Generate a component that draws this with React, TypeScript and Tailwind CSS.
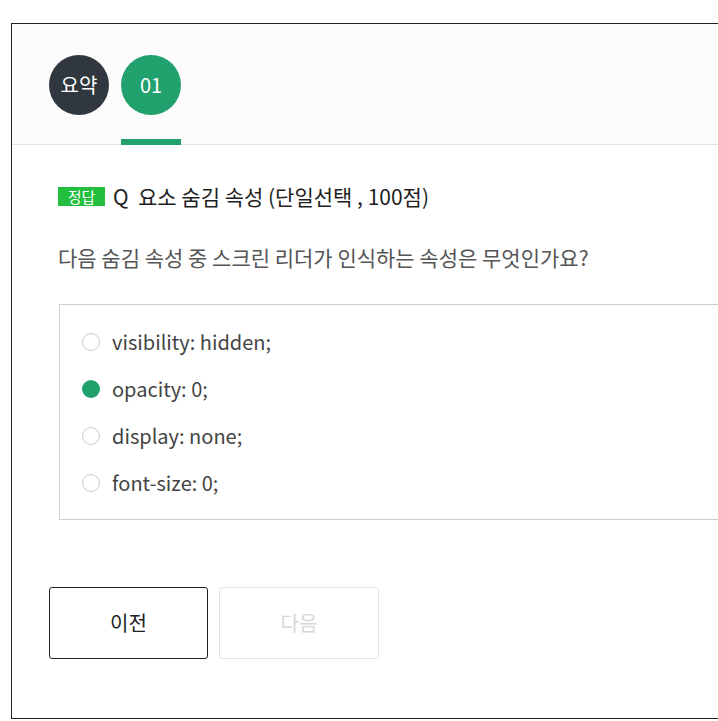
const options = [
  { label: "visibility: hidden;", checked: false },
  { label: "opacity: 0;", checked: true },
  { label: "display: none;", checked: false },
  { label: "font-size: 0;", checked: false },
];

function Radio({ checked }: { checked: boolean }) {
  if (checked) {
    return <span className="block h-[18px] w-[18px] shrink-0 rounded-full bg-[#20a06c]" />;
  }
  return <span className="block h-[18px] w-[18px] shrink-0 rounded-full border border-[#c8ccd0] bg-white" />;
}

export default function App() {
  return (
    <div
      className="h-[721px] w-[718px] overflow-hidden bg-white pl-[11px] pt-[23px]"
      style={{ fontFamily: '"Noto Sans CJK KR", "Noto Sans", sans-serif' }}
    >
      <div className="h-[696px] w-[760px] border border-[#222]">
        <div className="flex h-[121px] gap-3 border-b border-[#e2e2e2] bg-[#fcfcfc] pl-[37px] pt-[31px]">
          <div className="flex flex-col">
            <span className="grid h-[60px] w-[60px] place-items-center rounded-full bg-[#30373f] text-[20px] leading-none text-white">
              요약
            </span>
          </div>
          <div className="flex flex-col">
            <span className="grid h-[60px] w-[60px] place-items-center rounded-full bg-[#21a16d] text-[20px] leading-none text-white">
              01
            </span>
            <span className="-mb-px mt-auto block h-[6px] w-[60px] bg-[#21a16d]" />
          </div>
        </div>

        <div className="pl-[46px] pt-[37px]">
          <div className="flex h-[28px] items-center">
            <span className="grid h-[19px] w-[47px] place-items-center bg-[#22bf3f] text-[15px] leading-none text-white">
              정답
            </span>
            <h2 className="ml-[8px] text-[21px] leading-[28px] text-[#1e1e1e]">
              Q&nbsp;&nbsp;요소 숨김 속성 (단일선택 , 100점)
            </h2>
          </div>
          <p className="mt-[32px] text-[21px] leading-[30px] text-[#555]">
            다음 숨김 속성 중 스크린 리더가 인식하는 속성은 무엇인가요?
          </p>
          <ul className="ml-px mt-[32px] flex h-[216px] flex-col border border-[#cfcfcf] pl-[22px] pt-[13px]">
            {options.map((o) => (
              <li key={o.label} className="flex h-[47px] items-center gap-[12px]">
                <Radio checked={o.checked} />
                <span className="text-[20px] leading-none text-[#444]">{o.label}</span>
              </li>
            ))}
          </ul>
        </div>

        <div className="mt-[67px] flex gap-[11px] pl-[37px]">
          <button className="h-[72px] w-[159px] rounded-[3px] border border-[#222] bg-white text-[20px] text-[#222]">
            이전
          </button>
          <button className="h-[72px] w-[160px] rounded-[3px] border border-[#e3e4e6] bg-white text-[20px] text-[#d5d7da]">
            다음
          </button>
        </div>
      </div>
    </div>
  );
}
